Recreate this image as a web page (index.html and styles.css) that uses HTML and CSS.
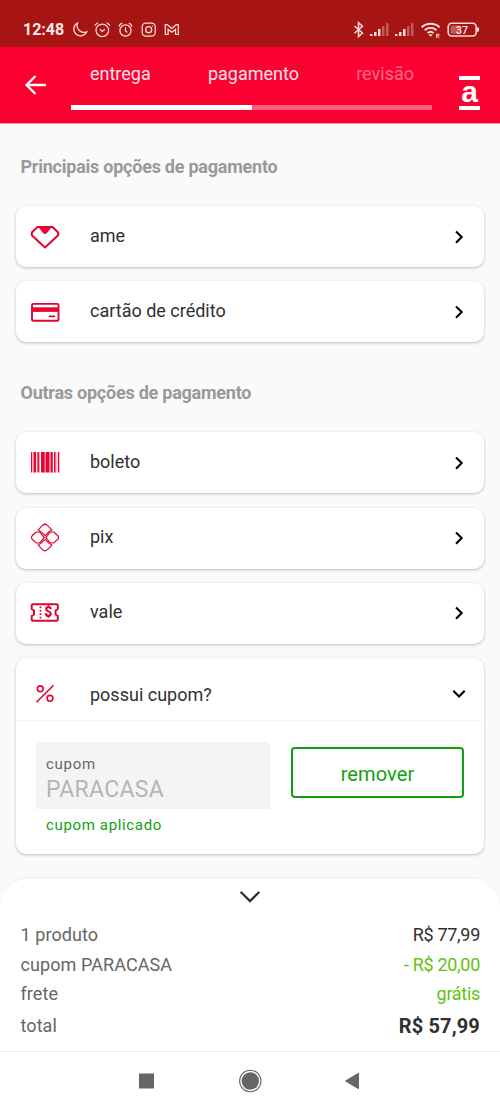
FILE: index.html
```html
<!DOCTYPE html>
<html lang="pt-BR">
<head>
<meta charset="utf-8">
<title>Pagamento</title>
<link rel="stylesheet" href="styles.css">
</head>
<body>
<div class="status">
  <span class="clock">12:48</span>
  <svg class="status-left" width="110" height="20" viewBox="70 20 110 20">
    <path d="M77.500 23a6.800 6.800 0 1 0 9.300 8.800A7 7 0 0 1 77.500 23z"/>
    <circle cx="102.300" cy="30.300" r="6.300"/><path d="M99.800 29.200l2.500 2.300 2.500-2.300M94.600 25.500l3.300-2.900M106.700 22.600l3.300 2.900"/>
    <circle cx="125.500" cy="30.500" r="5.600"/><path d="M125.500 27.200v3.500l1.800 1.800M119 26.700c.3-1.800 1.400-2.900 3.200-3.500M128.800 23.200c1.800.6 2.900 1.700 3.200 3.500"/>
    <rect x="142.200" y="23.200" width="13" height="13" rx="3.600"/><circle cx="148.700" cy="29.700" r="3"/><path d="M152 26.200h.8"/>
    <path d="M165.300 34.400v-9.700h2l4.500 3.700 4.500-3.700h2v9.700h-2.800v-5.100l-3.700 3-3.700-3v5.100z"/>
  </svg>
  <svg class="status-right" width="130" height="20" viewBox="350 20 130 20">
    <path stroke-width="1.500" d="M354.500 26l8 7-4 3.500V22.700l4 3.500-8 7"/>
    <g class="solid"><path d="M370 34h2.500v2H370zM374 32h2.500v4H374zM378 29h2.500v7H378zM395 34h2.500v2H395zM399 32h2.500v4H399zM403 29h2.500v7H403z"/>
    <path opacity=".35" d="M382 26h2.500v10H382zM386 23h2.500v13H386zM407 26h2.500v10H407zM411 23h2.500v13H411z"/></g>
    <path stroke-width="1.900" d="M421.600 27.300c5.300-4.700 12.700-4.700 18 0M424.700 30.300c3.500-3 8.300-3 11.800 0M427.600 33.100c1.800-1.500 4.200-1.500 6 0"/>
    <path class="solid" d="M428.500 34.300h4.200l-2.100 2.500z"/><path stroke-width=".9" d="M436.500 35.500h2.500v-1.300h-2.500v3h3"/>
    <rect x="448.200" y="23.200" width="28" height="12.800" rx="3.500" stroke-width="1.600"/><rect class="solid" x="450.500" y="25.500" width="9" height="8.200" rx="1" opacity=".35"/>
    <path d="M478 27.500v4" stroke-width="2"/>
    <text x="462" y="33.700" text-anchor="middle">37</text>
  </svg>
</div>
<header class="header">
  <svg class="back" width="24" height="22" viewBox="0 0 24 22"><path d="M11.500 2L2.500 11l9 9M2.500 11h19.500"/></svg>
  <div class="steps">
    <div class="labels"><span>entrega</span><span>pagamento</span><span class="off">revisão</span></div>
    <div class="track"><div class="fill"></div></div>
  </div>
  <div class="brand">a</div>
</header>
<main class="content">
  <h2 class="heading">Principais opções de pagamento</h2>
  <div class="list">
    <div class="card row">
      <svg class="icon" viewBox="0 0 30 30"><path d="M7.500 5h15l5.700 5.500v2.800L15 25.500 1.800 13.300v-2.800z" stroke-width="2" stroke-linejoin="round"/><path class="fill-red" d="M8 4.500h14L17 11q-2 2-4 0z"/></svg>
      <span class="name">ame</span><svg class="chev" viewBox="0 0 16 16"><path d="M5 2.400l5.700 5.700L5 13.800"/></svg>
    </div>
    <div class="card row">
      <svg class="icon" viewBox="0 0 30 30"><rect x="2" y="6.900" width="26.500" height="16.800" rx="1.300" stroke-width="1.900"/><path class="fill-red" d="M2 10.300h26.500v4.600H2z"/><path d="M19.500 19.400h4.700" stroke-width="1.900" stroke-linecap="round"/></svg>
      <span class="name">cartão de crédito</span><svg class="chev" viewBox="0 0 16 16"><path d="M5 2.400l5.700 5.700L5 13.800"/></svg>
    </div>
  </div>
  <h2 class="heading second">Outras opções de pagamento</h2>
  <div class="list">
    <div class="card row">
      <svg class="icon" viewBox="0 0 30 30"><path class="fill-red" d="M1 4h1.300v20.500H1zM3.500 4h2.600v20.500H3.500zM7.300 4h1.600v20.500H7.300zM11 4h3.700v20.500H11zM16 4h3.500v20.500H16zM20.500 4h2.300v20.500h-2.300zM24 4h1.400v20.500H24zM27.800 4h1.500v20.500h-1.500z"/><path class="fill-red" opacity=".5" d="M9 4h.7v20.500H9zM14.700 4h1.300v20.500h-1.300zM25.400 4h1v20.500h-1z"/></svg>
      <span class="name">boleto</span><svg class="chev" viewBox="0 0 16 16"><path d="M5 2.400l5.700 5.700L5 13.800"/></svg>
    </div>
    <div class="card row">
      <svg class="icon" viewBox="0 0 30 30"><g stroke-width="1.200" transform="translate(0 -.5)"><path d="M8.200 7.400L12.500 2.900q2.500-2.300 5 0l4.300 4.500-3.300 2.200L15 13.100l-3.500-3.500zM8.200 22.600l4.300 4.500q2.500 2.300 5 0l4.300-4.500-3.300-2.200L15 16.900l-3.500 3.500zM6.300 9.500L2.400 13q-1.900 2 0 4l3.900 3.500h2.200q1.100 0 1.900-.8L14.200 15l-3.800-4.700q-.8-.8-1.900-.8zM23.700 9.500l3.900 3.500q1.900 2 0 4l-3.900 3.500h-2.200q-1.100 0-1.900-.8L15.800 15l3.800-4.700q.8-.8 1.900-.8z"/></g></svg>
      <span class="name">pix</span><svg class="chev" viewBox="0 0 16 16"><path d="M5 2.400l5.700 5.700L5 13.800"/></svg>
    </div>
    <div class="card row">
      <svg class="icon" viewBox="0 0 30 30"><path d="M3 6.300h23.500q1.300 0 1.300 1.300v3.400l-2.200 1.500v4l2.200 1.500v3.400q0 1.300-1.300 1.300H3q-1.300 0-1.300-1.300V18L4 16.500v-4L1.700 11V7.600q0-1.300 1.300-1.300z" stroke-width="2"/><path d="M10.500 8.500v13" stroke-width="1.800" stroke-dasharray="1.700 1.700"/><text x="18.400" y="19.300" text-anchor="middle">$</text></svg>
      <span class="name">vale</span><svg class="chev" viewBox="0 0 16 16"><path d="M5 2.400l5.700 5.700L5 13.800"/></svg>
    </div>
    <section class="card coupon">
      <div class="row coupon-head">
        <svg class="icon" viewBox="0 0 30 30"><g stroke-width="1.600"><path d="M6.500 23.300L23.500 6.300"/><circle cx="10.300" cy="9.800" r="2.900"/><circle cx="20" cy="19.300" r="2.900"/></g></svg>
        <span class="name">possui cupom?</span><svg class="chev" viewBox="0 0 16 16"><path d="M2.300 4.700L8 10.400l5.700-5.700"/></svg>
      </div>
      <div class="coupon-body">
        <div class="field-wrap">
          <div class="field"><span class="field-label">cupom</span><span class="field-value">PARACASA</span></div>
          <span class="applied">cupom aplicado</span>
        </div>
        <button class="remove">remover</button>
      </div>
    </section>
  </div>
</main>
<footer class="sheet">
  <svg class="handle" width="22" height="14" viewBox="0 0 22 14"><path d="M2.300 2.500l8.700 8.600 8.700-8.600"/></svg>
  <div class="line"><span>1 produto</span><span class="amount">R$ 77,99</span></div>
  <div class="line"><span>cupom PARACASA</span><span class="green">- R$ 20,00</span></div>
  <div class="line"><span>frete</span><span class="green">grátis</span></div>
  <div class="line total"><span>total</span><strong>R$ 57,99</strong></div>
</footer>
<nav class="nav">
  <svg width="500" height="60" viewBox="0 1051 500 60"><rect x="139" y="1073.500" width="15" height="15"/><circle cx="250.300" cy="1081" r="8.700"/><circle class="ring" cx="250.300" cy="1081" r="10.700"/><path d="M345.500 1081l13-7.700v15.400z" stroke="#666" stroke-width="1" stroke-linejoin="round"/></svg>
</nav>
</body>
</html>
```
FILE: styles.css
```css
* { box-sizing: border-box; }
body { margin: 0; width: 500px; height: 1111px; overflow: hidden; display: flex; flex-direction: column; background: #fafafa; font-family: Roboto, sans-serif; color: #303030; }
svg { display: block; fill: none; flex: none; }
.status { height: 47px; flex: none; background: #a61414; display: flex; align-items: flex-start; padding: 20px 20px 0 23px; color: #ffeaea; }
.clock { width: 47px; font-size: 16px; line-height: 20px; font-weight: 700; letter-spacing: 0; }
.status svg { stroke: #ffdada; stroke-width: 1.25; }
.status .solid { fill: #ffdada; stroke: none; }
.status text { fill: #ffeaea; stroke: none; font: 500 10.500px Roboto, sans-serif; }
.status-right { margin-left: auto; }
.header { height: 77px; flex: none; background: #fb0031; border-bottom: 1px solid #fc9aae; color: #fff; display: flex; }
.back { margin: 27px 23px 0 24px; stroke: #fff; stroke-width: 2.3; }
.steps { width: 361px; }
.labels { display: flex; justify-content: space-between; padding: 16px 18px 0 19px; font-size: 18px; line-height: 22px; color: #ffe5eb; }
.labels .off { color: #fd6a87; }
.track { height: 5px; margin-top: 20px; background: #fd5c7c; }
.fill { width: 50%; height: 5px; background: #fff; }
.brand { width: 21px; height: 34px; margin: 29px 0 0 27px; padding-top: 1px; border-top: 4px solid #fff; border-bottom: 4px solid #fff; font: 700 30px/21px "Liberation Sans", sans-serif; text-align: center; }
.content { flex: none; height: 753px; padding: 31px 16px 0; }
.heading { margin: 0 0 27px 4.500px; font-size: 18px; line-height: 24px; font-weight: 700; letter-spacing: -0.24px; color: #999; }
.second { margin-top: 39px; }
.list { display: flex; flex-direction: column; gap: 14.300px; }
.card { background: #fff; border-radius: 10px; box-shadow: 0 1px 3px rgba(0,0,0,.25); }
.row { height: 61px; display: flex; align-items: center; padding: 0 17px 0 14px; }
.icon { width: 30px; height: 30px; stroke: #dc0832; }
.icon .fill-red { fill: #e80531; stroke: none; }
.icon text { fill: #dc0832; stroke: none; font: 900 14px Roboto, sans-serif; }
.name { margin-left: 30px; padding-bottom: 2px; flex: 1; font-size: 18px; line-height: 24px; }
.chev { width: 16px; height: 16px; stroke: #000; stroke-width: 2.1; }
.coupon { height: 196px; }
.coupon-head { height: 63px; padding-top: 10px; border-bottom: 1px solid #f5f5f5; }
.coupon-head .name { padding: 2px 0 0; }
.coupon-body { display: flex; justify-content: space-between; padding: 21px 20px 0; }
.field { width: 234px; height: 67px; padding: 12px 10px 0; display: flex; flex-direction: column; background: #f4f4f4; border-radius: 4px 4px 0 0; }
.field-label { font-size: 15px; line-height: 20px; letter-spacing: .75px; color: #666; }
.field-value { font-size: 23px; line-height: 32px; letter-spacing: .3px; color: #b5b5b5; }
.applied { display: block; margin: 6px 0 0 10px; font-size: 15px; line-height: 20px; letter-spacing: .65px; color: #12a012; }
.remove { width: 173px; height: 51px; margin-top: 5px; padding: 2px 0 0; background: #fff; border: 2px solid #12a012; border-radius: 4px; font: 20px Roboto, sans-serif; letter-spacing: .1px; color: #12a012; }
.sheet { height: 174px; flex: none; background: #fff; border: 1.500px solid #eee; border-bottom: 0; border-left: 0; border-right: 0; border-radius: 30px 30px 0 0; padding: 12px 20px 0; }
.handle { margin: 0 auto 17px; stroke: #303030; stroke-width: 2.3; stroke-linecap: round; }
.line { display: flex; justify-content: space-between; height: 29.700px; padding-left: .5px; font-size: 18px; line-height: 28px; letter-spacing: .08px; color: #666; }
.amount, strong { color: #303030; }
.green { color: #5fc312; }
.amount, .line .green { letter-spacing: -0.3px; }
.total { padding-top: 2px; }
strong { font-size: 20px; letter-spacing: .15px; }
.nav { height: 60px; flex: none; background: #fff; border-top: 1.500px solid #f1f1f1; }
.nav svg { fill: #666; margin-top: -1px; }
.nav .ring { fill: none; stroke: #666; stroke-width: 1.1; }
```
